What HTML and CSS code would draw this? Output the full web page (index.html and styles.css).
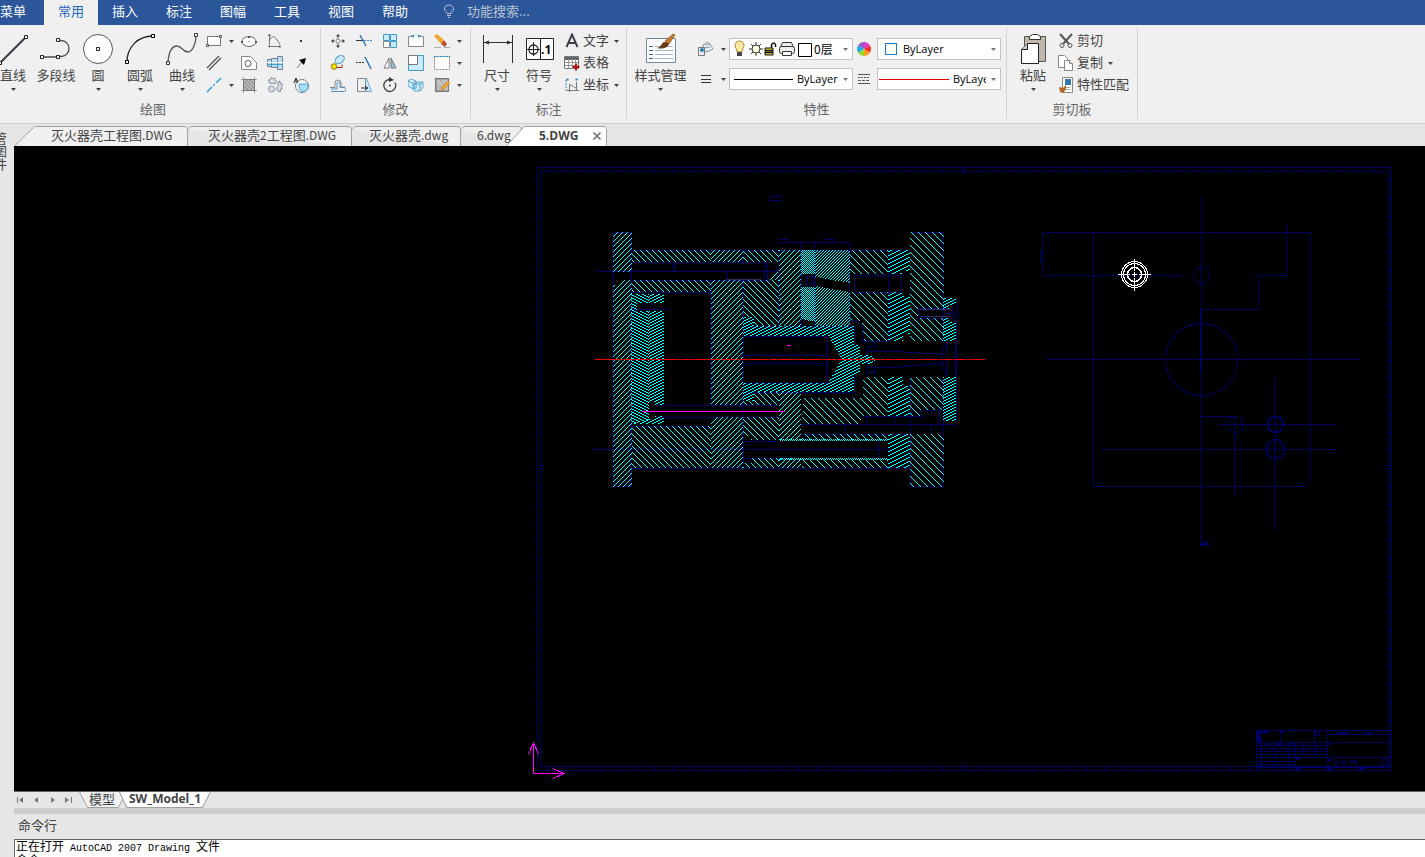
FILE: index.html
```html
<!DOCTYPE html>
<html lang="zh-CN">
<head>
<meta charset="utf-8">
<title>5.DWG</title>
<link rel="stylesheet" href="styles.css">
</head>
<body>
<svg class="defs" aria-hidden="true">
  <symbol id="down" viewBox="0 0 5 3"><path d="M0 0h5L2.500 3z" fill="currentColor"/></symbol>
</svg>
<div class="app">
<nav class="menubar">
  <button class="menu-item first">菜单</button>
  <button class="menu-item active">常用</button>
  <button class="menu-item">插入</button>
  <button class="menu-item">标注</button>
  <button class="menu-item">图幅</button>
  <button class="menu-item">工具</button>
  <button class="menu-item">视图</button>
  <button class="menu-item">帮助</button>
  <label class="search"><svg width="12" height="15" viewBox="0 0 12 15" fill="none" stroke="#b9c6dc"><path d="M4 9.500C4 7.500 1.500 7 1.500 5a4.500 4 0 0 1 9 0C10.500 7 8 7.500 8 9.500zM4 11.500h4M5 13.500h2"/></svg><input type="text" placeholder="功能搜索..." aria-label="功能搜索"></label>
</nav>

<div class="ribbon">
  <section class="group draw">
    <div class="tools">
      <button class="big edge"><svg class="ico" viewBox="0 0 32 32" width="32" height="32"><path d="M0 30L26 4" stroke="#3c3c46" stroke-width="2"/><g fill="#fff" stroke="#222"><path d="M24.500 2.500h3v3h-3zM-1.500 28.500h3v3h-3z"/></g></svg><span>直线</span><svg class="dn"><use href="#down"/></svg></button>
      <button class="big"><svg class="ico" viewBox="0 0 32 32" width="32" height="32" fill="none" stroke="#4a4a55"><path d="M2 24h18M20 7.500h1a8 8 0 0 1 0 16h-3" stroke-width="1.300"/><g fill="#fff" stroke="#222"><path d="M.5 22.500h3v3h-3zM16.500 22.500h3v3h-3zM16.500 5.500h3v3h-3z"/></g></svg><span>多段线</span></button>
      <button class="big"><svg class="ico" viewBox="0 0 32 32" width="32" height="32"><circle cx="16" cy="16" r="14.500" fill="#fff" stroke="#555"/><path d="M14.500 14.500h3v3h-3z" fill="#fff" stroke="#222"/></svg><span>圆</span><svg class="dn"><use href="#down"/></svg></button>
      <button class="big"><svg class="ico" viewBox="0 0 32 32" width="32" height="32"><path d="M3 29C3 14 14 3 29 3" fill="none" stroke="#222" stroke-width="1.300"/><path d="M1.500 27.500h3v3h-3zM27.500 1.500h3v3h-3z" fill="#fff" stroke="#000"/></svg><span>圆弧</span><svg class="dn"><use href="#down"/></svg></button>
      <button class="big"><svg class="ico" viewBox="0 0 32 32" width="32" height="32"><path d="M2 29C3 17 6 13 11 13s5 6 11 6c4 0 8-8 8-16" fill="none" stroke="#555" stroke-width="1.300"/><path d="M.5 28.500h3v3h-3zM28.500.5h3v3h-3z" fill="#fff" stroke="#333"/></svg><span>曲线</span><svg class="dn"><use href="#down"/></svg></button>
      <div class="grid draw-grid">
        <button aria-label="矩形"><svg width="16" height="16" viewBox="0 0 16 16"><path d="M1.500 3.500h13v9h-13z" fill="#fff" stroke="#777"/><path d="M.5 11.500h2v2h-2zM13.500 2.500h2v2h-2z" fill="#fff" stroke="#555"/></svg></button><button class="drop" aria-label="矩形选项"><svg class="dn"><use href="#down"/></svg></button>
        <button aria-label="椭圆"><svg width="16" height="16" viewBox="0 0 16 16"><ellipse cx="8" cy="8.500" rx="7" ry="5" fill="#fff" stroke="#666"/><path d="M7 3h2v2H7zM0 8h2v2H0zM14 8h2v2h-2zM7.500 8h1v1h-1z" fill="#555"/></svg></button>
        <button aria-label="公式曲线"><svg width="16" height="16" viewBox="0 0 16 16" fill="none" stroke="#777"><path d="M2.500 1.500v13M1 13.500h13M2 8C5 2 8 3 10 7l3 4M1 3l1.500-2L4 3M12 12l2 1.500-2 1.500"/></svg></button>
        <button aria-label="点"><svg width="16" height="16" viewBox="0 0 16 16"><path d="M7 7h2v2H7z" fill="#333"/></svg></button>
        <button aria-label="平行线"><svg width="16" height="16" viewBox="0 0 16 16"><path d="M1 13L13 1M3 15L15 3" stroke="#555" stroke-width="1.400"/></svg></button><i></i>
        <button aria-label="孔"><svg width="16" height="16" viewBox="0 0 16 16" fill="#fff" stroke="#888"><path d="M.5 1.500h9l6 6v7H.5z"/><circle cx="7" cy="8.500" r="3" stroke="#555"/></svg></button>
        <button aria-label="轴"><svg width="16" height="16" viewBox="0 0 16 16"><path d="M.5 4.500h4v7h-4zM4.500 3.500h6v9h-6zM10.500 1.500h5v13h-5z" fill="#bcdcf3" stroke="#6d8299"/><path d="M0 7.500h16" stroke="#fff"/><path d="M1 9.500h14" stroke="#3ba1dd"/></svg></button>
        <button aria-label="箭头"><svg width="16" height="16" viewBox="0 0 16 16"><path d="M4 13l6-7" stroke="#777"/><path d="M13 3L11 10 6 5z" fill="#000"/></svg></button>
        <button aria-label="中心线"><svg width="16" height="16" viewBox="0 0 16 16"><path d="M1 15L15 1" stroke="#29a5e3" stroke-width="1.500" stroke-dasharray="7 2 2 2"/></svg></button><button class="drop" aria-label="中心线选项"><svg class="dn"><use href="#down"/></svg></button>
        <button aria-label="填充"><svg width="16" height="16" viewBox="0 0 16 16" stroke="#777"><path d="M2.500 2.500h11v11h-11z" fill="#b4b4b8"/><path d="M2.500 0v16M13.500 0v16M0 2.500h16M0 13.500h16M3 5l8 8M5 3l8 8M3 9l4 4M9 3l4 4" stroke-width=".7"/></svg></button>
        <button aria-label="齿轮"><svg width="16" height="16" viewBox="0 0 16 16" fill="#d7dde3" stroke="#8793a0"><path d="M1.500 3l2-.5L4 .5l2 1 2-.5 0 2 1.500 1-1 2.500h-3l-3-.5zM11 5l2-1 0 2 2.500 1-1 2.500 1 2-2 .5v2.500l-3-.5-1-3 1.500-1.500z"/><circle cx="4.500" cy="12" r="3"/></svg></button>
        <button aria-label="局部放大"><svg width="16" height="16" viewBox="0 0 16 16"><circle cx="9" cy="9" r="6.500" fill="#fff" stroke="#777"/><path d="M6 7h9v3c0 6-9 6-9 0z" fill="#a9dcf8" stroke="#4ba8da"/><path d="M1 6l2-5 2 5M2 4h2" fill="none" stroke="#222"/></svg></button>
      </div>
    </div>
    <h2>绘图</h2>
  </section>

  <section class="group modify">
    <div class="tools">
      <div class="grid modify-grid">
        <button aria-label="移动"><svg width="16" height="16" viewBox="0 0 16 16"><circle cx="8" cy="8" r="2" fill="#fff" stroke="#888"/><path d="M6 3.500L8 1l2 2.500zM6 12.500L8 15l2-2.500zM3.500 6L1 8l2.500 2zM12.500 6L15 8l-2.500 2z" fill="#333"/><path d="M8 3v3M8 10v3M3 8h2M11 8h2" stroke="#666"/></svg></button>
        <button aria-label="裁剪"><svg width="16" height="16" viewBox="0 0 16 16"><path d="M0 7.500h7" stroke="#333"/><path d="M8 7.500h8" stroke="#3a86c8" stroke-dasharray="2 1"/><path d="M4 2l6 11" stroke="#1f6fb5" stroke-width="1.400"/></svg></button>
        <button aria-label="阵列"><svg width="16" height="16" viewBox="0 0 16 16" fill="#c8ebff" stroke="#469ac9"><path d="M1.500 1.500h6v6h-6zM8.500 1.500h6v6h-6zM8.500 8.500h6v6h-6z"/><path d="M1.500 8.500h6v6h-6z" fill="#fff" stroke="#888"/></svg></button>
        <button aria-label="打断"><svg width="16" height="16" viewBox="0 0 16 16"><path d="M4 3.500H.5v10h15v-10H12" fill="#fff" stroke="#888"/><path d="M3 2h3v3zM13 2h-3v3z" fill="#238bd0"/></svg></button>
        <button aria-label="删除"><svg width="16" height="16" viewBox="0 0 16 16"><path d="M0 3l3-2 7 6-3 4z" fill="#f1a735"/><path d="M7 11l3-4 3 4-2 3z" fill="#b8502c"/><path d="M0 14.500h7M10 14.500h6" stroke="#aaa"/></svg></button><button class="drop" aria-label="删除选项"><svg class="dn"><use href="#down"/></svg></button>
        <button aria-label="复制对象"><svg width="16" height="16" viewBox="0 0 16 16"><ellipse cx="10" cy="4.500" rx="5" ry="3.500" transform="rotate(-35 10 5)" fill="#c9e9fa" stroke="#4b9ac8"/><circle cx="4" cy="11.500" r="2.800" fill="#ffe100" stroke="#8a7a20"/><path d="M7 12.500h5v-3" fill="none" stroke="#a32121"/></svg></button>
        <button aria-label="延伸"><svg width="16" height="16" viewBox="0 0 16 16"><path d="M0 7.500h9" stroke="#333" stroke-dasharray="2 1"/><path d="M9 2l6 12" stroke="#1f6fb5" stroke-width="1.400"/></svg></button>
        <button aria-label="镜像"><svg width="16" height="16" viewBox="0 0 16 16"><path d="M7 3v10H2z" fill="#fff" stroke="#777"/><path d="M9 3v10h5z" fill="#8dc1e0" stroke="#777"/></svg></button>
        <button aria-label="缩放"><svg width="16" height="16" viewBox="0 0 16 16"><path d="M.5.5h15v15H.5z" fill="#c8ebff" stroke="#469ac9"/><path d="M.5.5h9v9h-9z" fill="#fff" stroke="#777"/></svg></button>
        <button aria-label="选择框"><svg width="16" height="16" viewBox="0 0 16 16"><path d="M.5 1.500h15v13H.5z" fill="#fff" stroke="#888" stroke-dasharray="2 1"/><path d="M0 1.500h16" stroke="#2493d1" stroke-dasharray="2 1"/></svg></button><button class="drop" aria-label="选择选项"><svg class="dn"><use href="#down"/></svg></button>
        <button aria-label="偏移"><svg width="16" height="16" viewBox="0 0 16 16" fill="none"><path d="M0 10.500h5V6a3 3 0 0 1 6 0v4h4" stroke="#888"/><path d="M1 14.500h13a2 2 0 0 0 0-4h-4V6a2 2 0 0 0-3 0v6H1" stroke="#5c91bb"/></svg></button>
        <button aria-label="拉伸"><svg width="16" height="16" viewBox="0 0 16 16"><path d="M1.500 1.500h9l5 13h-14z" fill="#c8ebff" stroke="#73aac9"/><path d="M1.500 1.500h8v13h-8z" fill="#eee" stroke="#888"/><path d="M5 11h6M9 9l3 2-3 2" stroke="#333" fill="none"/></svg></button>
        <button aria-label="旋转"><svg width="16" height="16" viewBox="0 0 16 16"><path d="M8 2.500a6 6 0 1 0 5 3" fill="none" stroke="#444" stroke-width="1.300"/><path d="M7 0l5 3-5 2z" fill="#333"/><circle cx="8" cy="8.500" r="1" fill="#333"/></svg></button>
        <button aria-label="分解"><svg width="16" height="16" viewBox="0 0 16 16" fill="#c8ebff" stroke="#4d96bd" stroke-width=".8"><path d="M0 4l3-2 5 2v7l-3 1-5-3zM0 4l5 2 3-2M5 6v6M6 7h6v7H6zM6 7l3-2h6v6l-3 3M12 7l3-2"/></svg></button>
        <button aria-label="编辑填充"><svg width="16" height="16" viewBox="0 0 16 16"><path d="M1.500 1.500h13v13h-13z" fill="#c4c4c4" stroke="#777"/><path d="M0 2.500h16M0 13.500h16M2.500 0v16M3 6l7 7M6 3l7 7M3 10l3 3" stroke="#888" stroke-width=".6"/><path d="M8 10l6-6 2 2-6 6-3 1z" fill="#f1a735" stroke="#a46b20" stroke-width=".5"/></svg></button><button class="drop" aria-label="填充选项"><svg class="dn"><use href="#down"/></svg></button>
      </div>
    </div>
    <h2>修改</h2>
  </section>

  <section class="group annotate">
    <div class="tools">
      <button class="big"><svg class="ico" viewBox="0 0 32 32" width="32" height="32"><path d="M2.500 2v28M31.500 2v28M3 9.500h28" stroke="#303038" fill="none"/><path d="M3 9.500l5-2v4zM31 9.500l-5-2v4z" fill="#303038"/></svg><span>尺寸</span><svg class="dn"><use href="#down"/></svg></button>
      <button class="big"><svg class="ico" viewBox="0 0 32 32" width="32" height="32"><path d="M3.500 5.500h27v21h-27z" fill="#fff" stroke="#222"/><path d="M17.500 5v22M4 16.500h13M10.500 9v14" stroke="#222"/><circle cx="10.500" cy="16.500" r="4.500" fill="none" stroke="#222" stroke-width="1.300"/><text x="18" y="21" font-family="Open Sans" font-weight="700" font-size="12">.1</text></svg><span>符号</span><svg class="dn"><use href="#down"/></svg></button>
      <div class="list">
        <button><svg width="16" height="16" viewBox="0 0 16 16"><path d="M2.500 14L8 1.500 13.500 14M4.500 10h7" fill="none" stroke="#3e3e48" stroke-width="1.900"/></svg><span>文字</span><svg class="dn"><use href="#down"/></svg></button>
        <button><svg width="16" height="16" viewBox="0 0 16 16"><path d="M.5 1.500h14v12H.5z" fill="#fff" stroke="#777"/><path d="M1 2h13v3H1z" fill="#62626c"/><path d="M1 7.500h13M1 10.500h13M4.500 4v10M8.500 4v10M11.500 4v10" stroke="#999"/><path d="M12 8.500v7M8.500 12h7" stroke="#b91010" stroke-width="2"/></svg><span>表格</span></button>
        <button><svg width="16" height="16" viewBox="0 0 16 16" fill="none" stroke="#777"><path d="M5.500 7v8M3 13.500h12M6 8c3 0 4 3 6 3M12.500 5v9"/><path d="M2 3v12" stroke="#3b8dc4" stroke-dasharray="2 1"/><path d="M2.500 2.500h2M11.500 2.500h2" stroke="#267bb5" stroke-width="2"/></svg><span>坐标</span><svg class="dn"><use href="#down"/></svg></button>
      </div>
    </div>
    <h2>标注</h2>
  </section>

  <section class="group properties">
    <div class="tools">
      <button class="big wide"><svg class="ico" viewBox="0 0 32 32" width="32" height="32"><path d="M1.500 5.500h29v24h-29z" fill="#fff" stroke="#71879b"/><path d="M4 13.500h4M4 17.500h4M4 21.500h4M4 25.500h4" stroke="#3c648e"/><path d="M10 13.500h18M10 17.500h18M10 21.500h18M10 25.500h18" stroke="#a4b5cb"/><path d="M20 8l8-7 2 1-6 9z" fill="#c9792c" stroke="#7a481c" stroke-width=".6"/><path d="M12 15c5-1 4-7 9-6l3 2c-2 5-8 5-12 4z" fill="#6b3c19"/></svg><span>样式管理</span><svg class="dn"><use href="#down"/></svg></button>
      <div class="props">
        <button class="pick" aria-label="图层"><svg width="16" height="16" viewBox="0 0 16 16" fill="#e9eef2" stroke="#8997a3"><path d="M5 4l4-3 3 2 3 5-4 2-5 1zM6 7l6-1M7 4l5-1"/><path d="M.5 6.500h6v8h-6z" stroke="#777"/><circle cx="4" cy="9" r="2" fill="#297fb7" stroke="none"/></svg><svg class="dn"><use href="#down"/></svg></button>
        <div class="combo layer"><svg width="80" height="18" viewBox="0 0 80 18"><path d="M3 12C3 9 1 8 1 5.500a4.500 4.500 0 0 1 9 0C10 8 8 9 8 12z" fill="#ffe9a0" stroke="#a5853a"/><path d="M3 12h5v4H3z" fill="#444"/><g stroke="#333" fill="#fffbe0"><path d="M22 2v14M15 9h14M17 4l10 10M27 4L17 14"/><circle cx="22" cy="9" r="4"/></g><path d="M31 8h8v7h-8z" fill="#e3d63b" stroke="#111"/><path d="M31 10.500h8M31 12.500h8M37.500 8V4.500q2.500-3 4 0V7" stroke="#111" stroke-width="1.500" fill="none"/><g stroke="#333" fill="#eee"><path d="M48.500 2.500h9l2 5h-13z"/><rect x="45.500" y="6.500" width="15" height="7" rx="2"/><path d="M48.500 11.500h9v4h-9z" fill="#fff"/></g><path d="M64.500 3.500h13v13h-13z" fill="#fff" stroke="#000"/></svg><select aria-label="当前图层"><option>0层</option></select><svg class="dn"><use href="#down"/></svg></div>
        <button class="pick2" aria-label="颜色"><svg width="16" height="16" viewBox="-8 -8 16 16"><path d="M0 0L-6 -3.500A7 7 0 0 1 0-7z" fill="#9b59d0"/><path d="M0 0V-7A7 7 0 0 1 6-3.500z" fill="#d63ec7"/><path d="M0 0L6-3.500A7 7 0 0 1 6 3.500z" fill="#f22d2d"/><path d="M0 0L6 3.500A7 7 0 0 1 0 7z" fill="#ff9b20"/><path d="M0 0V7A7 7 0 0 1-6 3.500z" fill="#94d82d"/><path d="M0 0L-6 3.500A7 7 0 0 1-6-3.500z" fill="#20a8e0"/></svg></button>
        <div class="combo"><i class="swatch"></i><select aria-label="颜色"><option>ByLayer</option></select><svg class="dn"><use href="#down"/></svg></div>
        <button class="pick" aria-label="线宽"><svg width="16" height="16" viewBox="0 0 16 16"><path d="M3 4.500h10M3 8.500h10M3 11.500h10" stroke="#333"/></svg><svg class="dn"><use href="#down"/></svg></button>
        <div class="combo"><i class="rule"></i><select aria-label="线宽"><option>ByLayer</option></select><svg class="dn"><use href="#down"/></svg></div>
        <button class="pick2" aria-label="线型"><svg width="16" height="16" viewBox="0 0 16 16"><path d="M2 3.500h12M2 12.500h12" stroke="#555"/><path d="M2 6.500h12" stroke="#555" stroke-dasharray="2 1"/><path d="M2 9.500h12" stroke="#555" stroke-dasharray="3 1"/></svg></button>
        <div class="combo"><i class="rule red"></i><select aria-label="线型"><option>ByLayer</option></select><svg class="dn"><use href="#down"/></svg></div>
      </div>
    </div>
    <h2>特性</h2>
  </section>

  <section class="group clipboard">
    <div class="tools">
      <button class="big"><svg class="ico" viewBox="0 0 32 32" width="32" height="32"><path d="M7.500 3.500h21v25h-21z" fill="#c1b8ad" stroke="#555"/><path d="M12.500 6.500v-3l3-2h5l3 2v3z" fill="#fff" stroke="#333"/><path d="M10.500 10.500h11v20h-17v-14z" fill="#fff" stroke="#222"/><path d="M10.500 10.500v6h-6" fill="#ccc" stroke="#222"/></svg><span>粘贴</span><svg class="dn"><use href="#down"/></svg></button>
      <div class="list">
        <button><svg width="16" height="16" viewBox="0 0 16 16"><path d="M2 1l9 10M14 1L5 11" stroke="#555" stroke-width="2"/><circle cx="4" cy="12.500" r="2" fill="#eee" stroke="#555"/><circle cx="12" cy="12.500" r="2" fill="#eee" stroke="#555"/></svg><span>剪切</span></button>
        <button><svg width="16" height="16" viewBox="0 0 16 16" fill="#fff" stroke="#888"><path d="M.5.5h6l3 3v9h-9z"/><path d="M6.500 5.500h5l3 3v7h-8z"/><path d="M11.500 5.500v3h3"/></svg><span>复制</span><svg class="dn"><use href="#down"/></svg></button>
        <button><svg width="16" height="16" viewBox="0 0 16 16"><path d="M4.500.5h10v15h-10z" fill="#fff" stroke="#888"/><path d="M7 2h6v6H7z" fill="#3478b3"/><path d="M7 10.500h5M7 12.500h5" stroke="#aaa"/><path d="M1 10l4 1 3-3v4l-3 4-3-1z" fill="#b8641e"/></svg><span>特性匹配</span></button>
      </div>
    </div>
    <h2>剪切板</h2>
  </section>
</div>

<div class="workspace">
<aside class="side"><button>管图件</button></aside>
<main class="main">
<div class="doctabs">
  <button class="doc d1"><svg viewBox="0 0 174 20" preserveAspectRatio="none"><path d="M.5 20L20.500.5h150q2.500 0 3 3V20"/></svg><span>灭火器壳工程图<small>.DWG</small></span></button>
  <button class="doc d2"><svg viewBox="0 0 164 20" preserveAspectRatio="none"><path d="M0 3.500l3-3h157q3 0 3.500 3V20"/></svg><span>灭火器壳<small>2</small>工程图<small>.DWG</small></span></button>
  <button class="doc d3"><svg viewBox="0 0 109 20" preserveAspectRatio="none"><path d="M0 3.500l3-3h102q3 0 3.500 3V20"/></svg><span>灭火器壳<small>.dwg</small></span></button>
  <button class="doc d4"><svg viewBox="0 0 64 20" preserveAspectRatio="none"><path d="M0 3.500l3-3h54q3 0 3.500 3V20"/></svg><span><small>6.dwg</small></span></button>
  <div class="doc d5"><svg viewBox="0 0 102 20" preserveAspectRatio="none"><path class="on" d="M.5 20L18.500.5H99q2 0 2.500 3V20"/></svg><button class="title">5.DWG</button><button class="close" aria-label="关闭"><svg width="8" height="8" viewBox="0 0 8 8"><path d="M.5.5l7 7M7.500.5l-7 7" stroke="#777" stroke-width="1.600"/></svg></button></div>
</div>

<svg class="canvas" viewBox="14 146 1411 645" preserveAspectRatio="xMidYMid slice" shape-rendering="crispEdges" role="img" aria-label="工程图">
  <defs>
    <pattern id="f5" width="5" height="5" patternUnits="userSpaceOnUse"><path fill="#0ff" d="M4 0h1v1h-1zM3 1h1v1h-1zM2 2h1v1h-1zM1 3h1v1h-1zM0 4h1v1h-1z"/></pattern>
    <pattern id="b6" width="6" height="6" patternUnits="userSpaceOnUse"><path fill="#0ff" d="M0 0h1v1h-1zM1 1h1v1h-1zM2 2h1v1h-1zM3 3h1v1h-1zM4 4h1v1h-1zM5 5h1v1h-1z"/></pattern>
    <pattern id="b7" width="7" height="7" patternUnits="userSpaceOnUse"><path fill="#0ff" d="M0 0h1v1h-1zM1 1h1v1h-1zM2 2h1v1h-1zM3 3h1v1h-1zM4 4h1v1h-1zM5 5h1v1h-1zM6 6h1v1h-1z"/></pattern>
    <pattern id="f3" width="3" height="3" patternUnits="userSpaceOnUse"><path fill="#0ff" d="M2 0h1v1h-1zM1 1h1v1h-1zM0 2h1v1h-1z"/></pattern>
    <pattern id="ch" width="2" height="2" patternUnits="userSpaceOnUse"><path fill="#0ff" d="M0 0h1v1h-1zM1 1h1v1h-1z"/></pattern>
    <pattern id="sf" width="6" height="3" patternUnits="userSpaceOnUse"><path fill="#0ff" d="M4 0h2v1h-2zM2 1h2v1h-2zM0 2h2v1h-2z"/></pattern>
    <pattern id="sf4" width="8" height="4" patternUnits="userSpaceOnUse"><path fill="#0ff" d="M6 0h2v1h-2zM4 1h2v1h-2zM2 2h2v1h-2zM0 3h2v1h-2z"/></pattern>
    <pattern id="sb" width="6" height="3" patternUnits="userSpaceOnUse"><path fill="#0ff" d="M0 0h2v1h-2zM2 1h2v1h-2zM4 2h2v1h-2z"/></pattern>
  </defs>

  <!-- sheet frame and title block -->
  <g fill="none" stroke="#000060">
    <path d="M537.500 167.500h854v603h-854zM540.500 171.500h848v595h-848z"/>
    <path d="M547 169.500H1391M547 768.500H1256" stroke-width="4" stroke-dasharray="1 17"/>
    <path d="M539 180V766M1390 180V766" stroke-width="3" stroke-dasharray="1 17"/>
    <path d="M964.500 167v8M964.500 763v8M537 465.500h7M1385 465.500h7M769.500 196.500h12v4h-12z"/>
    <path d="M1256.500 730.500h135v40h-135zM1280.500 730v13M1314.500 730v26M1327.500 730v40M1328 734.500h63M1256 742.500h135M1256 745.500h72M1256 748.500h72M1256 751.500h72M1256 754.500h72M1256 757.500h135M1256 761.500h40M1256 764.500h40M1256 767.500h135M1261.500 742v28M1275.500 742v28M1288.500 742v28M1295.500 742v28M1303.500 742v12M1382.500 757v10M1382 764.500h9M1315.500 731.500h4v4h-4zM1365.500 730v4"/>
    <path d="M1257 731h12v2h-7l-2 3 2 3v3h-5zM1280 731h4v2h-4zM1266 743h3v2h-3zM1277 743h5v2h-5zM1290 743h3v2h-3zM1337 732h10v2h-10zM1367 732h4v2h-4zM1328 743h3v2h-3zM1296 758h4v2h-4zM1328 759h4v2h-4zM1295 768h5v2h-5zM1327 768h5v2h-5zM1359 768h7v2h-7zM1385 759h2v3h-2z" fill="#000060" stroke="none"/>
    <path d="M1334 764l2-3M1337 760v4M1340 764l2-4M1343 760v5M1345.500 760v7M1349 760v4M1351 763v-3h2v3M1354.500 764v-4h2v4"/>
  </g>

  <!-- section view: outlines -->
  <g fill="none" stroke="#000068">
    <path d="M613.500 232.500h18v254h-18zM632 250.500h278M632 262.500h138M632 280.500h138M632 292.500h79M632 426.500h79M632 468.500h278M711.500 280v125M743.500 250v12M743.500 280v188M779.500 250v76M801.500 250v76M815.500 250v76M849.500 242v84M888.500 250v91M910.500 232.500h33v109M910.500 377v109.500h33V377M956.500 298v123M598 271.500h180M592 449.500h300"/>
    <path d="M673.500 264v7M675.500 264v7M726.500 272v8M764.500 264v16M767.500 264v16M743 336.500h84v47h-84M743 355.500h84M743 363.500h84M743 326.500h111v19h5M743 392.500h111v-18M655.500 405.500h124M655.500 417.500h124M632 309.500h35M658.500 305v5M778.500 242.500h71M778.500 239.500h9v3M824.500 242v-3h9v3M801.500 242v8M814.500 242v8"/>
    <path d="M806.500 276.500h7v8h-7zM854.500 275.500h47v17h-47zM850.500 320.500h6l6 6v15h26M867.500 346.500h8v-5M867.500 346v26h8v-5M867 351.500h28l50 3h-4M867 367.500h28l50-5M941.500 365v-12l5-11M941.500 363l5 13M947.500 342v34M955.500 342v34M918.500 308.500h31v10h-31zM945 313.500h14M953.500 305v17M862.500 416.500h59v-6h18v13M867.500 416v8M895.500 416v8M801 424.500h155M802 434.500h108M845.500 424v9M930.500 424v9M879.500 441v17M743 441.500h36M743.500 458.500h45"/>
  </g>
  <path d="M727 279.500h34M920 309.500h30M920 316.500h30" stroke="#303060"/>

  <!-- section view: hatching -->
  <path fill="url(#f5)" d="M613 232h19v40h-19zM620 280h12v207h-19V285h7zM711 250h32v12h-32zM711 280h32v125h-32zM716 417h27v51h-32v-46zM779 250h22v76h-22v-46h-9v-3l4-5h5zM779 392h22v48h-22zM779 458h22v10h-22z"/>
  <path fill="url(#b6)" d="M632 250h79v12h-79zM743 250h36v12h-36zM632 280h79v12h-79zM632 426h79v42h-79zM743 280h36v46h-25v-9h-11zM754 392h25v13h-36v-4h11zM743 417h36v23h-28v-4h-8zM751 458h28v10h-36v-5h8z"/>
  <path fill="url(#b7)" d="M850 250h38v24h-38zM850 292h38v49h-24l-2-19-6-2h-6zM910 232h34v77h-26v9h26v23h-34zM803 398h57l3-5v-16h25v39h-26l-2 8h-58zM910 377h34v33h-23v6h-11zM802 434h86v6h-86zM802 460h86v8h-86zM910 434h34v53h-34z"/>
  <path fill="url(#sb)" d="M631 294h18v9h-12v8h12v109l-18 4z"/>
  <path fill="url(#sf)" d="M649 294h15v9h-15zM649 311h15v94h-9v-3h-6zM650 419h5v-3h9v8h-33z"/>
  <path fill="url(#sf)" d="M743 317h11v9h100v19h6v10h10l7 4-7 5h-10v10h-6v18H754v9h-11v-18h85l14-24-14-23h-85zM943 298h13v7h-7v4h-6zM943 318h6v4h7v19h-13zM943 377h13v44h-13z"/>
  <path fill="url(#sf4)" d="M888 250h22v21h-8v3h-14zM888 292h14v4h8v38h-7v7h-15zM888 377h15v9h7v30h-22zM888 434h22v34h-22z"/>
  <path fill="url(#ch)" d="M801 250h14v24h-14zM801 287h14v34h-7l-7-3zM779 439h109v2H779zM779 458h109v2H779z"/>
  <path fill="url(#f3)" d="M815 250h35v33l-35-6zM815 286l35 6v34h-35z"/>

  <path d="M595 359.500h390" stroke="#f00" stroke-dasharray="9 1 14 1 3 1"/>
  <path d="M642 411.500h143M787 345.500h4" stroke="#f0f"/>

  <!-- plan view -->
  <g fill="none" stroke="#000060">
    <path d="M1043.500 275.500v-43h267v247l-7 7h-210v-254M1040.500 251.500h3M1040.500 251v10h3M1043 275.500h139M1201.500 198v173M1286.500 223v52.500h-28v34h-58v236h5M1200 416.500h37M1046 359.500h314M1235.500 416v81M1275.500 377v153M1218 424.500h118M1101 449.500h235M1202 541.500h5v2h-5zM1200 544.500h10"/>
    <circle cx="1201.500" cy="275.500" r="8"/><circle cx="1201.500" cy="359.500" r="36"/><circle cx="1235.500" cy="424.500" r="8"/><circle cx="1275.500" cy="424.500" r="8" stroke-width="2"/><circle cx="1275.500" cy="449.500" r="10"/><circle cx="1275.500" cy="449.500" r="8"/>
  </g>

  <!-- cursor and axes -->
  <g fill="none" stroke="#fff"><circle cx="1134.500" cy="274.500" r="13"/><circle cx="1134.500" cy="274.500" r="11"/><circle cx="1134.500" cy="274.500" r="7" stroke-width="1.500"/><path d="M1118 274.500h12M1132 274.500h5M1139 274.500h12M1134.500 259v12M1134.500 272v5M1134.500 278v13"/></g>
  <path d="M533.500 743v30.500h31M528.500 754l5-11 5 11M553 768.500l11 5-11 5" fill="none" stroke="#f0f"/>
</svg>

<div class="layouts">
  <div class="nav">
    <button aria-label="首个"><svg width="8" height="8" viewBox="0 0 8 8"><path d="M1 1h1v6H1zM7 1v6L3 4z"/></svg></button>
    <button aria-label="上一个"><svg width="8" height="8" viewBox="0 0 8 8"><path d="M6 1v6L2 4z"/></svg></button>
    <button aria-label="下一个"><svg width="8" height="8" viewBox="0 0 8 8"><path d="M3 1v6l4-3z"/></svg></button>
    <button aria-label="末个"><svg width="8" height="8" viewBox="0 0 8 8"><path d="M7 1h1v6H7zM1 1v6l4-3z"/></svg></button>
  </div>
  <button class="lay m1"><svg viewBox="0 0 48 16" preserveAspectRatio="none"><path d="M.5 0l8 15.500h31L47.500 0"/></svg><span>模型</span></button>
  <button class="lay m2"><svg viewBox="0 0 90 16" preserveAspectRatio="none"><path class="on" d="M.5 0l7 15.500h74L89.500 0"/></svg><span>SW_Model_1</span></button>
</div>
<div class="splitter"></div>
<section class="command">
  <h2>命令行</h2>
  <div class="log" role="log"><p>正在打开<span> AutoCAD 2007 Drawing </span>文件</p><p>命令:</p></div>
</section>
</main>
</div>
</div>
</body>
</html>
```
FILE: styles.css
```css
* { box-sizing: border-box; }
body { margin: 0; font: 13px/18px "Noto Sans CJK SC", sans-serif; color: #444; background: #e6e6e6; overflow: hidden; }
button { border: 0; padding: 0; margin: 0; background: none; font: inherit; color: inherit; }
svg { display: block; flex: none; }
h2 { margin: 0; font-size: 13px; font-weight: 400; line-height: 18px; }
.defs { position: absolute; width: 0; height: 0; }
.app { height: 100vh; display: flex; flex-direction: column; }
.dn { width: 5px; height: 3px; color: #444; }

.menubar { flex: none; height: 25px; display: flex; background: #2b579a; color: #fff; }
.menu-item { width: 54px; padding-bottom: 4px; }
.menu-item.first { width: 44px; text-align: left; }
.menu-item.active { background: #f0f0f0; color: #1a66c2; }
.search { display: flex; align-items: center; gap: 12px; margin-left: 21px; padding-bottom: 3px; }
.search input { width: 160px; border: 0; padding: 0; background: none; color: #fff; font: inherit; outline: 0; }
.search input::placeholder { color: #b9c3d4; opacity: 1; }

.ribbon { flex: none; display: flex; height: 99px; padding: 3px 0 4px; background: #f0f0f0; border-bottom: 1px solid #cfcfcf; }
.group { display: flex; flex-direction: column; border-right: 1px solid #d2d2d2; }
.group h2 { text-align: center; color: #666; line-height: 16px; }
.tools { display: flex; height: 73px; padding-top: 2px; }
.draw { width: 321px; }
.draw h2 { padding-right: 14px; }
.modify { width: 150px; }
.annotate { width: 156px; }
.properties { width: 380px; }
.clipboard { width: 131px; }
.big { width: 42px; height: 68px; display: flex; flex-direction: column; align-items: center; padding-top: 3px; }
.big .dn { margin-top: 4px; }
.big span { height: 18px; white-space: nowrap; margin-top: 1px; }
.big.edge { width: 35px; padding-right: 9px; }
.big.edge .ico { align-self: flex-start; }
.big.wide { width: 61px; }
.grid { display: grid; grid-auto-rows: 22px; }
.grid button { display: flex; align-items: center; justify-content: center; }
.draw-grid { grid-template-columns: 22px 12px 24px 27px 26px; }
.modify-grid { grid-template-columns: repeat(5, 26px) 8px; padding-left: 4px; }
.annotate .tools, .clipboard .tools { padding-left: 5px; }
.list { display: flex; flex-direction: column; padding-left: 4px; }
.list button { display: flex; align-items: center; height: 22px; gap: 3px; text-align: left; }
.list span { padding-bottom: 2px; }
.list .dn { margin-left: 2px; }

.properties .tools { padding-left: 3px; }
.props { display: grid; grid-template-columns: 38px 124px 24px 124px; grid-auto-rows: 30px; padding-top: 4px; align-items: center; }
.pick { display: flex; align-items: center; gap: 7px; padding-left: 7px; }
.pick2 { display: flex; padding-left: 3px; }
.combo { position: relative; display: flex; align-items: center; height: 22px; padding: 0 4px; border: 1px solid #c3c3c3; background: #fff; }
.combo .dn { position: absolute; right: 4px; color: #777; }
.combo select { flex: 1; min-width: 0; margin-right: 10px; padding: 0; appearance: none; border: 0; background: transparent; color: #000; font: 11px/18px "Open Sans", "Noto Sans CJK SC", sans-serif; }
.layer select { font: 12px/18px "Noto Sans CJK SC", sans-serif; }
.swatch { width: 12px; height: 12px; margin: 0 6px 0 3px; border: 1px solid #1a78c8; flex: none; }
.rule { width: 59px; height: 1px; margin-right: 4px; background: #000; flex: none; }
.rule.red { width: 70px; margin-left: -3px; background: #e00000; }

.workspace { flex: 1; min-height: 0; display: flex; }
.side { flex: none; width: 14px; padding-top: 8px; overflow: hidden; }
.side button { width: 14px; margin-left: -7px; line-height: 14px; writing-mode: vertical-rl; }
.main { flex: 1; min-width: 0; display: flex; flex-direction: column; }
.doctabs { flex: none; height: 22px; padding-top: 2px; display: flex; }
.doc { position: relative; height: 20px; padding-bottom: 2px; text-align: left; white-space: nowrap; line-height: 18px; flex: none; }
.doc small { font-size: 12px; }
.doc > svg, .lay > svg { position: absolute; left: 0; top: 0; width: 100%; height: 100%; fill: #f0f0f0; stroke: #a0a0a0; }
.doc .on, .lay .on { fill: #fff; }
.doc > span, .doc > button, .lay > span { position: relative; }
.d1 { width: 174px; padding-left: 37px; }
.d2 { width: 164px; padding-left: 20px; }
.d3 { width: 109px; padding-left: 17px; }
.d4 { width: 64px; padding-left: 16px; margin-right: -19px; }
.d5 { width: 101px; padding: 0 6px 0 33px; display: flex; align-items: center; justify-content: space-between; }
.title { font: 700 12px/18px "Open Sans", sans-serif; }
.canvas { flex: 1; min-height: 0; width: 100%; background: #000; }

.layouts { flex: none; height: 17px; display: flex; border-top: 1px solid #646464; }
.nav { display: flex; align-items: center; padding-left: 2px; width: 65px; gap: 8px; fill: #777; }
.lay { position: relative; height: 16px; line-height: 14px; text-align: left; padding-bottom: 2px; }
.m1 { width: 48px; padding-left: 10px; margin-right: -8px; }
.m2 { width: 92px; padding-left: 10px; font: 700 12px/14px "Open Sans", sans-serif; }
.splitter { flex: none; height: 6px; background: #cdcdcd; }
.command { flex: none; height: 43px; display: flex; flex-direction: column; }
.command h2 { height: 25px; padding: 2px 4px; }
.log { flex: 1; overflow: hidden; border: solid #646464; border-width: 1px 0 0 1px; background: #fff; color: #000; font: 12px/12px "Noto Sans CJK SC", monospace; padding-left: 1px; }
.log p { margin: 0; height: 14px; line-height: 11px; white-space: pre; }
.log span { font: 10px/11px "Liberation Mono", monospace; }
```
